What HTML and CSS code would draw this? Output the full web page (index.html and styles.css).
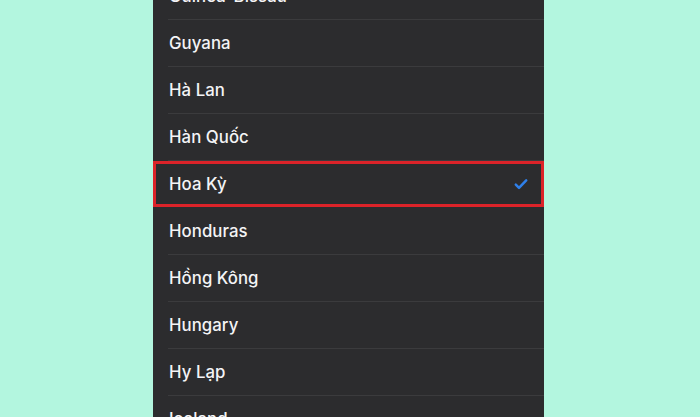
FILE: index.html
```html
<!DOCTYPE html>
<html lang="vi">
<head>
<meta charset="utf-8">
<link rel="stylesheet" href="styles.css">
</head>
<body>
<div class="stage">
  <ul class="list">
    <li class="row"><span class="label">Guinea-Bissau</span></li>
    <li class="row"><span class="label">Guyana</span></li>
    <li class="row"><span class="label">Hà Lan</span></li>
    <li class="row"><span class="label">Hàn Quốc</span></li>
    <li class="row selected"><span class="label">Hoa Kỳ</span>
      <svg class="check" width="14" height="12" viewBox="0 0 14 12"><path d="M1.8 6.6 L5 9.8 L12.2 2.4" fill="none" stroke="#2f80ea" stroke-width="2.5" stroke-linecap="round" stroke-linejoin="round"/></svg>
    </li>
    <li class="row"><span class="label">Honduras</span></li>
    <li class="row"><span class="label">Hồng Kông</span></li>
    <li class="row"><span class="label">Hungary</span></li>
    <li class="row"><span class="label">Hy Lạp</span></li>
    <li class="row"><span class="label">Iceland</span></li>
  </ul>
</div>
</body>
</html>
```

FILE: styles.css
```css
html, body {
  margin: 0;
  padding: 0;
  height: 100%;
  overflow: hidden;
}
body {
  background: #b3f6df;
  font-family: "Inter", "Roboto", sans-serif;
}
.stage {
  width: 391px;
  height: 417px;
  margin-left: 153px;
  background: #2c2c2e;
  overflow: hidden;
}
.list {
  list-style: none;
  margin: -27px 0 0 0;
  padding: 0;
}
.row {
  height: 47px;
  margin-left: 15px;
  padding-right: 15px;
  display: flex;
  align-items: center;
  justify-content: space-between;
  border-bottom: 1px solid #3b3b3d;
  box-sizing: border-box;
}
.label {
  color: #f4f4f6;
  font-size: 16.8px;
  font-weight: 550;
  letter-spacing: 0.05px;
  padding-left: 1px;
}
.row.selected {
  margin-left: 0;
  padding-left: 15px;
  padding-right: 15px;
  box-shadow: inset 0 0 0 3px #dc2329;
  border-bottom-color: transparent;
}
.check {
  display: block;
  margin-right: 1px;
}
```
